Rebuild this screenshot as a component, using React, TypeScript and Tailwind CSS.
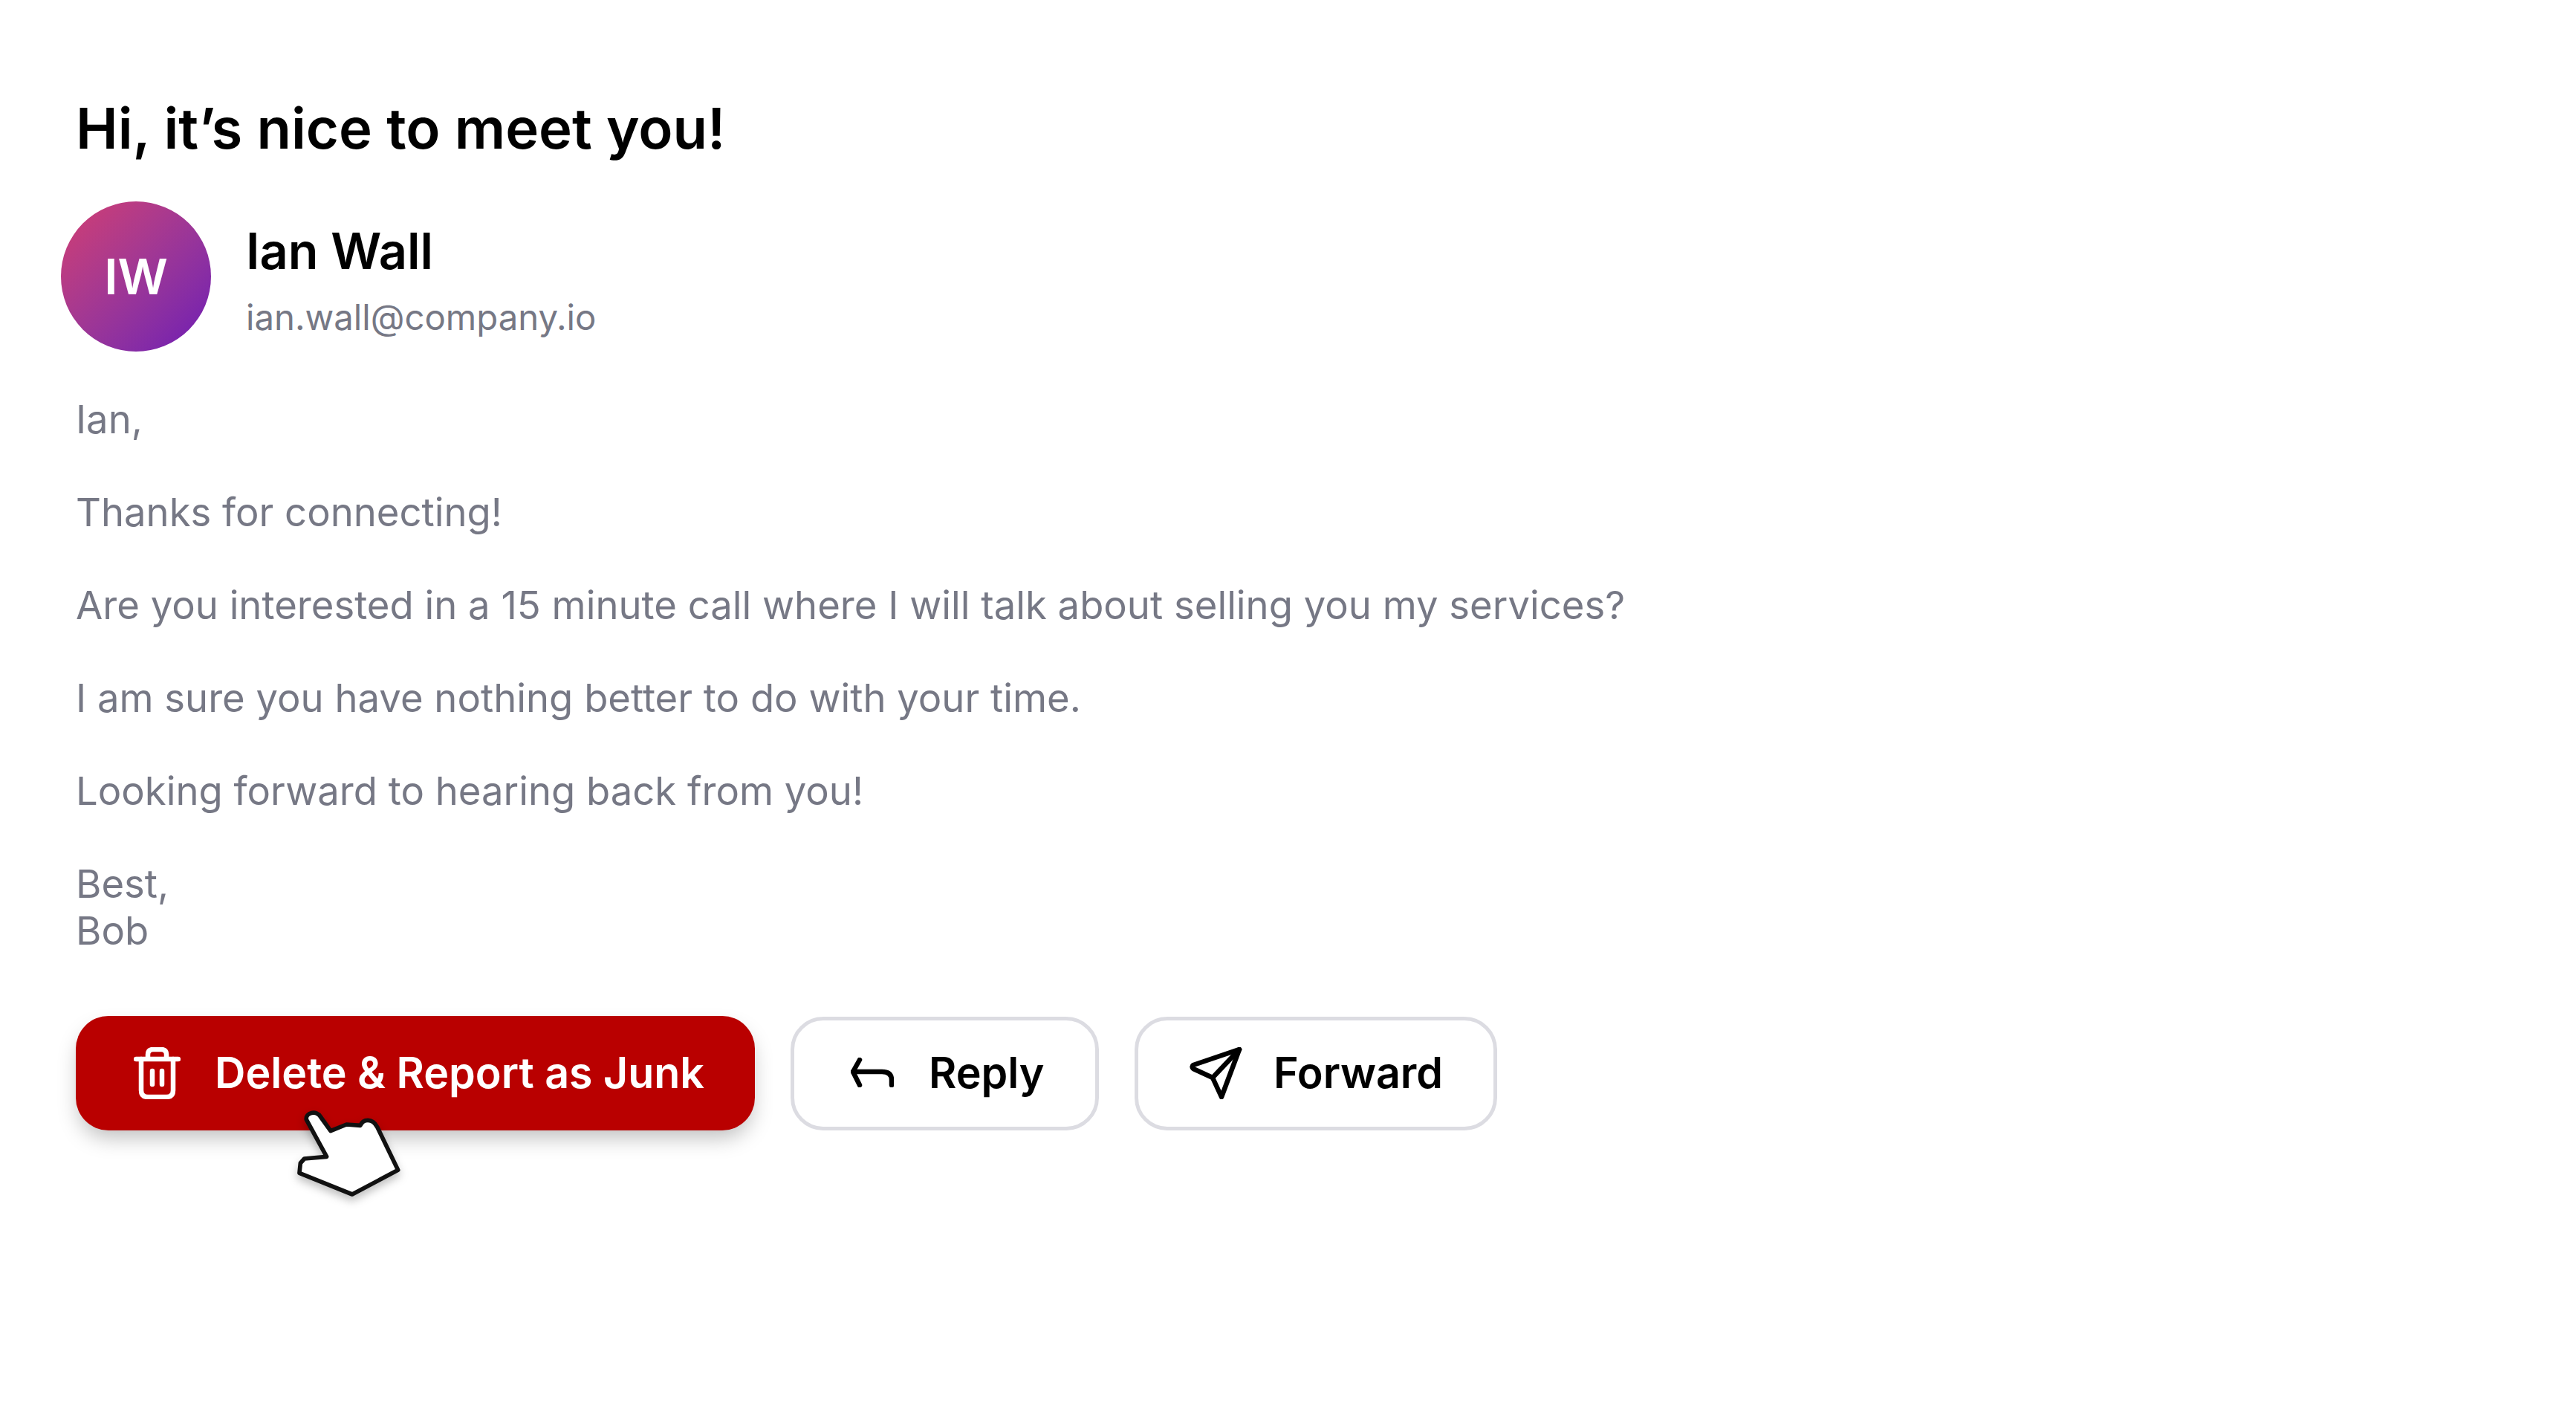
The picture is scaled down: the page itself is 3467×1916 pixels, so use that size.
export default function App() {
    return (
        <div className="w-[3467px] h-[1916px] bg-white pl-[102px] pt-[124px] font-['Inter',sans-serif] overflow-hidden">
            <h1 className="text-[76px] leading-[96px] font-semibold text-black">Hi, it’s nice to meet you!</h1>

            <div className="flex items-center gap-[47px] -ml-[20px] mt-[51px]">
                <div className="w-[202px] h-[202px] rounded-full bg-gradient-to-br from-[#d33c70] to-[#6f14b4] flex items-center justify-center text-white text-[66px] font-semibold">
                    IW
                </div>
                <div className="flex flex-col">
                    <div className="text-[66.7px] leading-[84px] mt-[10px] font-semibold text-black">Ian Wall</div>
                    <div className="text-[47.3px] leading-[62px] mt-[16px] text-[#767885]">ian.wall@company.io</div>
                </div>
            </div>

            <div className="mt-[60px] text-[52.6px] leading-[62.5px] text-[#767885] flex flex-col gap-[62.5px]">
                <p>Ian,</p>
                <p>Thanks for connecting!</p>
                <p>Are you interested in a 15 minute call where I will talk about selling you my services?</p>
                <p>I am sure you have nothing better to do with your time.</p>
                <p>Looking forward to hearing back from you!</p>
                <p>
                    Best,
                    <br />
                    Bob
                </p>
            </div>

            <div className="flex items-center gap-[48px] mt-[84px]">
                <div className="relative">
                    <button className="h-[154px] w-[914px] rounded-[44px] bg-[#b90000] shadow-[0_14px_28px_-4px_rgba(0,0,0,0.25)] flex items-center pl-[78px] gap-[46px] text-white text-[57.3px] font-semibold">
                        <svg width="63" height="70" viewBox="0 0 63 70" fill="none" stroke="currentColor" strokeWidth="6.5" strokeLinecap="round" strokeLinejoin="round">
                            <path d="M3 16H60" />
                            <path d="M10 16V58Q10 67 19 67H44Q53 67 53 58V16" />
                            <path d="M19 14V10Q19 3 26 3H37Q44 3 44 10V14" />
                            <path d="M25 32V50M38 32V50" />
                        </svg>
                        Delete &amp; Report as Junk
                    </button>
                    <svg className="absolute left-[297px] top-[126px] drop-shadow-[0_6px_6px_rgba(0,0,0,0.25)]" width="140" height="118" viewBox="60 60 420 354" fill="#fff" stroke="#111" strokeWidth="17" strokeLinejoin="round">
                        <path d="M100 100C96 72 140 60 158 90L198 146L262 120L318 124C328 98 366 92 386 130L470 304L285 402L72 316L76 276L92 258L182 250Z" />
                    </svg>
                </div>

                <button className="h-[153px] w-[415px] rounded-[44px] border-[5px] border-[#dcdce2] bg-white flex items-center pl-[76px] gap-[47px] text-black text-[57.3px] font-semibold">
                    <svg className="-mt-[2px]" width="58" height="40" viewBox="0 0 58 40" fill="none" stroke="currentColor" strokeWidth="6.5" strokeLinecap="round" strokeLinejoin="round">
                        <path d="M12 3L3 19L12 37" />
                        <path d="M3 19H42Q55 19 55 30V37" />
                    </svg>
                    Reply
                </button>

                <button className="h-[153px] w-[488px] rounded-[44px] border-[5px] border-[#dcdce2] bg-white flex items-center pl-[69px] gap-[42px] text-black text-[57.3px] font-semibold">
                    <svg width="71" height="70" viewBox="0 0 71 70" fill="none" stroke="currentColor" strokeWidth="6.5" strokeLinecap="round" strokeLinejoin="round">
                        <path d="M67 3L5 24Q2 26 5 29L31 41L43 67L67 3Z" />
                        <path d="M67 3L31 41" />
                    </svg>
                    Forward
                </button>
            </div>
        </div>
    );
}
